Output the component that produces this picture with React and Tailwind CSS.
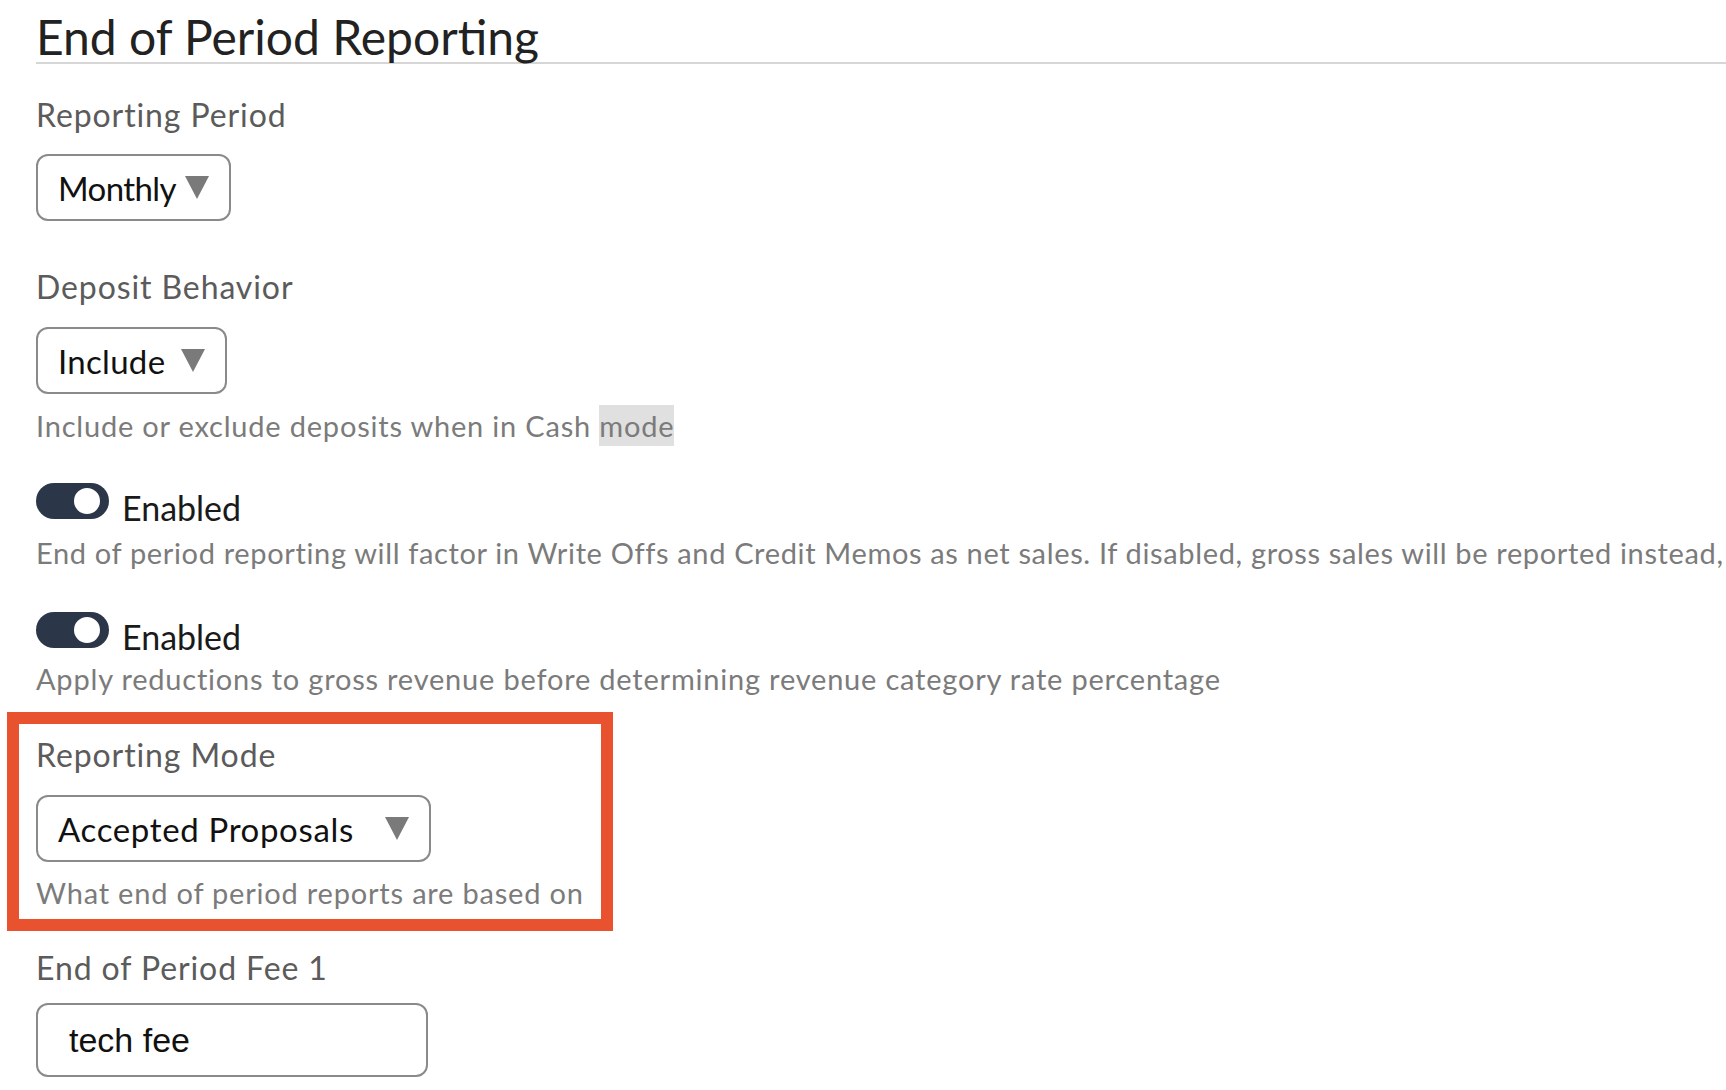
import React from 'react';

const font = { fontFamily: 'Lato, "Noto Sans", sans-serif' };

const Arrow = () => (
  <svg width="24" height="23" viewBox="0 0 24 23" className="shrink-0">
    <polygon points="0,0 24,0 12,23" fill="#7a7a7a" />
  </svg>
);

const Select = ({ value, width, track }) => (
  <div
    className={`flex items-center justify-between h-[67px] pl-[20px] pr-[20px] border-2 border-[#8a8a8a] rounded-[12px] bg-white ${width}`}
  >
    <span className={`text-[33px] leading-[40px] text-[#111] ${track}`}>{value}</span>
    <Arrow />
  </div>
);

const Toggle = () => (
  <div className="w-[73px] h-[36px] rounded-full bg-[#2b3649] flex items-center justify-end pr-[6px] shrink-0">
    <div className="w-[32px] h-[32px] rounded-full bg-white border-[3px] border-[#2b3649]" />
  </div>
);

const Label = ({ children, className = '' }) => (
  <div className={`text-[32px] leading-[36px] tracking-[0.9px] text-[#5b5b5b] ${className}`}>{children}</div>
);

const Help = ({ children, className = 'tracking-[0.8px]' }) => (
  <div className={`text-[29px] leading-[34px] text-[#7b7b7b] whitespace-nowrap ${className}`}>
    {children}
  </div>
);

const EnabledRow = ({ className = '' }) => (
  <div className={`flex items-start gap-[13px] ${className}`}>
    <Toggle />
    <span className="mt-[5px] text-[34px] leading-[40px] text-[#1a1a1a]">Enabled</span>
  </div>
);

export default function App() {
  return (
    <div className="w-[1726px] h-[1090px] bg-white overflow-hidden" style={font}>
      <div className="pl-[36px]">
        <h1 className="pt-[12px] text-[48px] leading-[50px] font-normal text-[#222] border-b-2 border-[#d6d6d6]">
          End of Period Reporting
        </h1>

        <Label className="mt-[33px]">Reporting Period</Label>
        <div className="mt-[21px]">
          <Select value="Monthly" width="w-[195px]" track="tracking-[-0.6px]" />
        </div>

        <Label className="mt-[48px]">Deposit Behavior</Label>
        <div className="mt-[22px]">
          <Select value="Include" width="w-[191px]" track="tracking-[0.3px]" />
        </div>
        <div className="mt-[11px] text-[29px] leading-[41px] tracking-[0.8px] text-[#7b7b7b] whitespace-nowrap">
          Include or exclude deposits when in Cash{' '}
          <span className="inline-block bg-[#e0e0e0]">mode</span>
        </div>

        <EnabledRow className="mt-[37px]" />
        <Help className="mt-[8px] tracking-[0.65px]">
          End of period reporting will factor in Write Offs and Credit Memos as net sales. If disabled, gross sales will be reported instead,
        </Help>

        <EnabledRow className="mt-[42px]" />
        <Help className="mt-[5px] tracking-[0.8px]">
          Apply reductions to gross revenue before determining revenue category rate percentage
        </Help>
      </div>

      <div className="mt-[16px] ml-[7px] w-[606px] border-[12px] border-[#e8522f] pl-[17px] pt-[13px] pb-[9px]">
        <Label>Reporting Mode</Label>
        <div className="mt-[22px]">
          <Select value="Accepted Proposals" width="w-[395px]" track="tracking-[0.65px]" />
        </div>
        <Help className="mt-[14px] tracking-[0.8px]">What end of period reports are based on</Help>
      </div>

      <div className="pl-[36px]">
        <Label className="mt-[19px]">End of Period Fee 1</Label>
        <div className="mt-[17px] w-[392px] h-[74px] border-2 border-[#8a8a8a] rounded-[12px] flex items-center pl-[31px]">
          <span
            className="text-[34px] leading-[40px] text-[#111]"
            style={{ fontFamily: '"Liberation Sans", Arial, sans-serif' }}
          >
            tech fee
          </span>
        </div>
      </div>
    </div>
  );
}
